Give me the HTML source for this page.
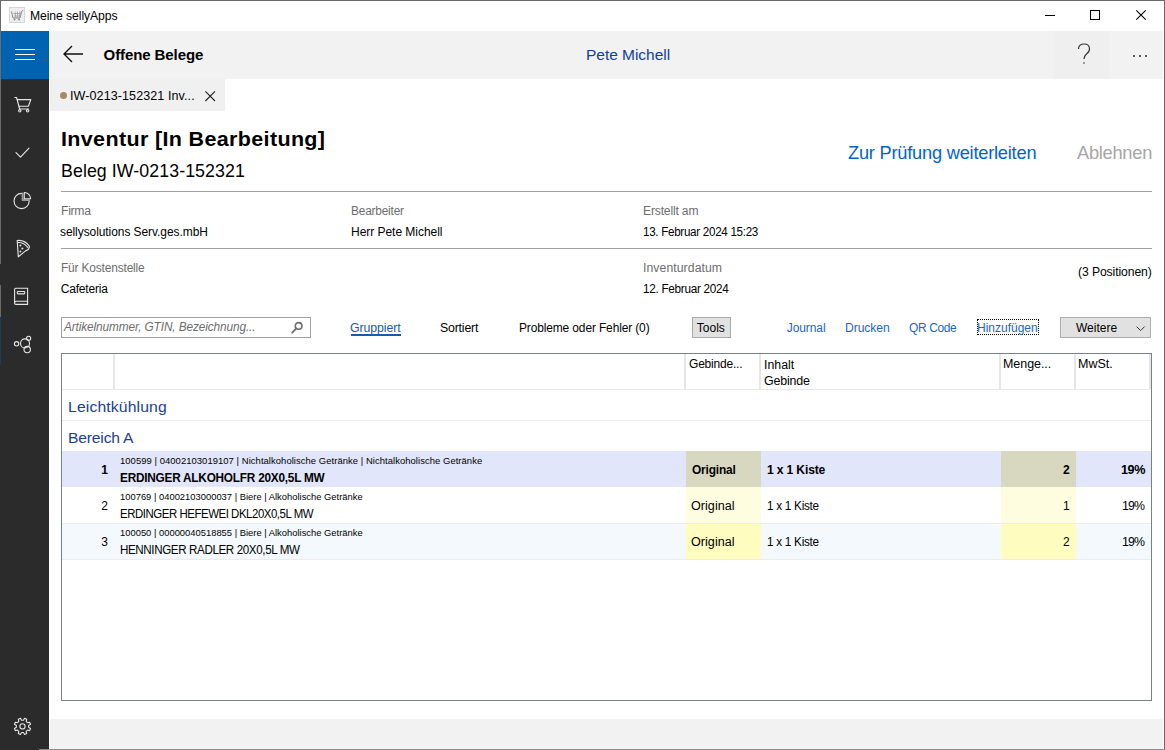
<!DOCTYPE html>
<html><head><meta charset="utf-8"><title>Meine sellyApps</title>
<style>
html,body{margin:0;padding:0;}
body{width:1165px;height:750px;overflow:hidden;position:relative;background:#fff;font-family:"Liberation Sans",sans-serif;}
.a{position:absolute;}
.t{position:absolute;white-space:nowrap;line-height:1;font-family:"Liberation Sans",sans-serif;}
svg{position:absolute;overflow:visible;}
</style></head><body>
<!-- window borders -->
<div class="a" style="left:0;top:0;width:1165px;height:1px;background:#6b6b6b"></div>

<div class="a" style="left:1164px;top:0;width:1px;height:750px;background:#666"></div>
<!-- app icon -->
<div class="a" style="left:9px;top:7px;width:16px;height:16px;background:#efefef;border:1px solid #d6d6d6;box-sizing:border-box"></div>
<svg style="left:9px;top:7px" width="16" height="16" viewBox="0 0 16 16"><path d="M2.5 4.5 L4 11 L11 11 L12.5 5 L14 3" fill="none" stroke="#8a8a8a" stroke-width="1"/><path d="M4.5 6.5 L12 6.5 M5 9 L11.5 9 M6 4.5 L6.8 11 M8.5 4.5 L8.5 11 M11 4.5 L10.2 11" stroke="#a0a0a0" stroke-width="0.8" fill="none"/><circle cx="5.5" cy="12.5" r="0.9" fill="#888"/><circle cx="10" cy="12.5" r="0.9" fill="#888"/></svg>
<!-- window controls -->
<div class="a" style="left:1045px;top:15px;width:10px;height:1px;background:#000"></div>
<div class="a" style="left:1090px;top:10px;width:10px;height:10px;border:1px solid #000;box-sizing:border-box"></div>
<svg style="left:1136px;top:10px" width="10" height="10" viewBox="0 0 10 10"><path d="M0.3 0.3 L9.7 9.7 M9.7 0.3 L0.3 9.7" stroke="#000" stroke-width="1.1"/></svg>

<!-- sidebar -->
<div class="a" style="left:0;top:31px;width:49px;height:719px;background:#2b2b2b"></div>
<div class="a" style="left:1px;top:31px;width:48px;height:48px;background:#0063b1"></div>
<div class="a" style="left:0;top:0;width:1px;height:264px;background:#6a6a6a"></div>
<div class="a" style="left:0;top:285px;width:1px;height:32px;background:#6a6a6a"></div>
<div class="a" style="left:0;top:317px;width:1px;height:48px;background:#1f3b5c"></div>
<div class="a" style="left:15px;top:49px;width:20px;height:1px;background:#fff"></div>
<div class="a" style="left:15px;top:54px;width:20px;height:1px;background:#fff"></div>
<div class="a" style="left:15px;top:59px;width:20px;height:1px;background:#fff"></div>
<!-- cart -->
<svg style="left:0;top:0" width="50" height="750">
 <g fill="none" stroke="#e6e6e6" stroke-width="1.1" stroke-linejoin="round" stroke-linecap="round">
  <path d="M14.8 97.5 L16.6 97.5 L19.6 109 L28.6 109"/>
  <path d="M17.2 99.6 L30.8 99.6 L28.4 106.2 L19 106.2"/>
  <circle cx="19.8" cy="110.8" r="1.2"/>
  <circle cx="27.6" cy="110.8" r="1.2"/>
  <!-- check -->
  <path d="M16 152.6 L20.5 157.2 L29 148.2"/>
  <!-- pie -->
  <path d="M21.6 193.4 A7.6 7.6 0 1 0 29.2 201"/>
  <path d="M24.3 192.5 A6.3 6.3 0 0 1 30.6 198.8 L24.3 198.8 Z"/>
  <path d="M22.6 193.6 L22.6 200 L29.2 200" stroke="#9c9c9c" stroke-width="2"/>
  <!-- pizza -->
  <path d="M17.2 240.5 Q24.8 239.6 29.4 246.2 Q29.6 249.6 25.9 250.6 L18.3 256.8 Z"/>
  <path d="M17.9 242.5 Q23.8 242.2 27.9 247.6"/>
  <!-- book -->
  <path d="M14.6 289.5 Q14.6 288.3 15.8 288.3 L27.6 288.3 L27.6 304.4 L15.8 304.4 Q14.6 304.4 14.6 303.2 Z"/>
  <path d="M14.6 302.6 Q14.6 301.2 16 301.2 L27.6 301.2"/>
  <rect x="17.3" y="291.5" width="7.4" height="2.4" rx="0.6"/>
  <!-- share -->
  <circle cx="16.6" cy="343.8" r="2.2"/>
  <circle cx="25" cy="343.4" r="4.5"/>
  <circle cx="28.6" cy="338.3" r="2.1"/>
  <circle cx="27.2" cy="349.6" r="3.2"/>
 </g>
 <g fill="#e6e6e6">
  <circle cx="20.4" cy="245.4" r="1"/><circle cx="22.4" cy="248.4" r="1"/><circle cx="20.4" cy="251.6" r="1"/>
 </g>
 <g fill="none" stroke="#e6e6e6" stroke-width="1.1" stroke-linejoin="round">
  <path d="M23.42 720.27 L24.58 718.36 L26.71 719.25 L26.19 721.42 L27.48 722.71 L29.65 722.19 L30.54 724.32 L28.63 725.48 L28.63 727.32 L30.54 728.48 L29.65 730.61 L27.48 730.09 L26.19 731.38 L26.71 733.55 L24.58 734.44 L23.42 732.53 L21.58 732.53 L20.42 734.44 L18.29 733.55 L18.81 731.38 L17.52 730.09 L15.35 730.61 L14.46 728.48 L16.37 727.32 L16.37 725.48 L14.46 724.32 L15.35 722.19 L17.52 722.71 L18.81 721.42 L18.29 719.25 L20.42 718.36 L21.58 720.27 Z"/>
  <circle cx="22.5" cy="726.4" r="2.6"/>
 </g>
</svg>

<!-- header -->
<div class="a" style="left:50px;top:31px;width:1113px;height:48px;background:#f2f2f2"></div>
<div class="a" style="left:1054px;top:31px;width:55px;height:48px;background:#efefef"></div>
<svg style="left:63px;top:45px" width="21" height="18" viewBox="0 0 21 18"><path d="M20 9 L1 9 M9 1 L1 9 L9 17" fill="none" stroke="#111" stroke-width="1.35"/></svg>
<!-- help ? and more -->
<svg style="left:1076px;top:43px" width="18" height="24"><path d="M2.5 6 Q2.5 1 8.2 1 Q13.5 1 13.5 6 Q13.5 9 10.5 11 Q8.5 12.5 8 16" fill="none" stroke="#333" stroke-width="1.2"/><circle cx="8" cy="20" r="0.8" fill="#333"/></svg>
<div class="a" style="left:1133px;top:55px;width:2.4px;height:2.4px;border-radius:2px;background:#222"></div>
<div class="a" style="left:1139px;top:55px;width:2.4px;height:2.4px;border-radius:2px;background:#222"></div>
<div class="a" style="left:1145px;top:55px;width:2.4px;height:2.4px;border-radius:2px;background:#222"></div>

<!-- tab -->
<div class="a" style="left:50px;top:79px;width:175px;height:32px;background:#f0f0f0"></div>
<div class="a" style="left:60px;top:92px;width:7px;height:7px;border-radius:50%;background:#a68a64"></div>
<svg style="left:205px;top:91px" width="11" height="11" viewBox="0 0 11 11"><path d="M0.4 0.4 L10 10 M10 0.4 L0.4 10" stroke="#222" stroke-width="1.1"/></svg>

<!-- separators -->
<div class="a" style="left:61px;top:191px;width:1091px;height:1px;background:#a0a0a0"></div>
<div class="a" style="left:61px;top:248px;width:1091px;height:1px;background:#a0a0a0"></div>

<!-- search box -->
<div class="a" style="left:61px;top:317px;width:250px;height:21px;border:1px solid #a0a0a0;box-sizing:border-box;background:#fff"></div>
<svg style="left:290px;top:321px" width="16" height="14" viewBox="0 0 16 14"><circle cx="8.6" cy="4.9" r="3.3" fill="none" stroke="#6b6b6b" stroke-width="1.6"/><path d="M6.3 7.3 L2.2 11.6" stroke="#6b6b6b" stroke-width="1.7" stroke-linecap="round"/></svg>
<!-- Gruppiert underline -->
<div class="a" style="left:351px;top:334px;width:50px;height:2px;background:#1a5aa8"></div>
<!-- Tools button -->
<div class="a" style="left:692px;top:317px;width:39px;height:21px;border:1px solid #a9a9a9;box-sizing:border-box;background:#e1e1e1"></div>
<!-- Hinzufuegen focus rect -->
<div class="a" style="left:977px;top:319px;width:62px;height:16px;border:1px dotted #000;box-sizing:border-box"></div>
<!-- Weitere button -->
<div class="a" style="left:1060px;top:317px;width:91px;height:21px;border:1px solid #adadad;box-sizing:border-box;background:#e1e1e1"></div>
<svg style="left:1136px;top:326px" width="10" height="6" viewBox="0 0 10 6"><path d="M0.6 0.6 L4.6 4.6 L8.6 0.6" fill="none" stroke="#333" stroke-width="1"/></svg>

<!-- grid -->
<div class="a" style="left:61px;top:353px;width:1091px;height:348px;border:1px solid #7a7f88;box-sizing:border-box;background:#fff"></div>
<div class="a" style="left:62px;top:389px;width:1088px;height:1px;background:#e8e8e8"></div>
<div class="a" style="left:113px;top:354px;width:2px;height:35px;background:#e6e6e6"></div>
<div class="a" style="left:684px;top:354px;width:2px;height:35px;background:#e6e6e6"></div>
<div class="a" style="left:759px;top:354px;width:2px;height:35px;background:#e6e6e6"></div>
<div class="a" style="left:999px;top:354px;width:2px;height:35px;background:#e6e6e6"></div>
<div class="a" style="left:1074px;top:354px;width:2px;height:35px;background:#e6e6e6"></div>
<div class="a" style="left:1149px;top:354px;width:2px;height:35px;background:#e6e6e6"></div>
<div class="a" style="left:62px;top:420px;width:1089px;height:1px;background:#ececec"></div>
<!-- rows -->
<div class="a" style="left:62px;top:451px;width:1089px;height:36px;background:#e1e6fa"></div>
<div class="a" style="left:686px;top:451px;width:75px;height:36px;background:#d8d8c0"></div>
<div class="a" style="left:1001px;top:451px;width:75px;height:36px;background:#d8d8c0"></div>
<div class="a" style="left:686px;top:487px;width:75px;height:36px;background:#fefde0"></div>
<div class="a" style="left:1001px;top:487px;width:75px;height:36px;background:#fefde0"></div>
<div class="a" style="left:62px;top:523px;width:1089px;height:36px;background:#f3f9fc"></div>
<div class="a" style="left:686px;top:523px;width:75px;height:36px;background:#fffcc0"></div>
<div class="a" style="left:1001px;top:523px;width:75px;height:36px;background:#fffcc0"></div>
<div class="a" style="left:62px;top:523px;width:1089px;height:1px;background:#ececec"></div>
<div class="a" style="left:62px;top:559px;width:1089px;height:1px;background:#ececec"></div>

<!-- bottom strip -->
<div class="a" style="left:50px;top:719px;width:1113px;height:30px;background:#f2f2f2"></div>
<div class="a" style="left:39px;top:749px;width:1126px;height:1px;background:#8c8c8c"></div>

<div class="t" style="left:29.61px;top:9.90px;font-size:12.2px;color:#000;letter-spacing:-0.074px;transform:scaleX(0.9977);transform-origin:0 0">Meine sellyApps</div>
<div class="t" style="left:103.60px;top:47.10px;font-size:15px;color:#000;font-weight:bold;letter-spacing:-0.094px">Offene Belege</div>
<div class="t" style="left:586.00px;top:46.70px;font-size:15.5px;color:#10409a;letter-spacing:-0.027px">Pete Michell</div>
<div class="t" style="left:69.78px;top:89.60px;font-size:12.3px;color:#000;letter-spacing:0.091px;transform:scaleX(1.0188);transform-origin:0 0">IW-0213-152321 Inv...</div>
<div class="t" style="left:60.77px;top:128.80px;font-size:20.8px;color:#000;font-weight:bold;letter-spacing:0.336px;transform:scaleX(1.0340);transform-origin:0 0">Inventur [In Bearbeitung]</div>
<div class="t" style="left:60.79px;top:162.70px;font-size:17.7px;color:#000;letter-spacing:0.059px;transform:scaleX(1.0062);transform-origin:0 0">Beleg IW-0213-152321</div>
<div class="t" style="left:848.40px;top:143.90px;font-size:18.5px;color:#0063cf;letter-spacing:-0.207px;transform:scaleX(0.9837);transform-origin:0 0">Zur Prüfung weiterleiten</div>
<div class="t" style="left:1077.00px;top:143.90px;font-size:18.5px;color:#a6a6a6;letter-spacing:-0.285px;transform:scaleX(0.9884);transform-origin:0 0">Ablehnen</div>
<div class="t" style="left:60.80px;top:204.60px;font-size:12px;color:#6d6d6d;letter-spacing:-0.284px;transform:scaleX(1.0149);transform-origin:0 0">Firma</div>
<div class="t" style="left:59.80px;top:226.20px;font-size:12px;color:#000;letter-spacing:-0.056px;transform:scaleX(0.9965);transform-origin:0 0">sellysolutions Serv.ges.mbH</div>
<div class="t" style="left:351.40px;top:204.60px;font-size:12px;color:#6d6d6d;letter-spacing:-0.193px;transform:scaleX(0.9886);transform-origin:0 0">Bearbeiter</div>
<div class="t" style="left:351.40px;top:226.20px;font-size:12px;color:#000;letter-spacing:-0.052px;transform:scaleX(1.0032);transform-origin:0 0">Herr Pete Michell</div>
<div class="t" style="left:642.60px;top:204.60px;font-size:12px;color:#6d6d6d;letter-spacing:-0.158px;transform:scaleX(1.0066);transform-origin:0 0">Erstellt am</div>
<div class="t" style="left:642.60px;top:226.20px;font-size:12px;color:#000;letter-spacing:-0.309px;transform:scaleX(0.9696);transform-origin:0 0">13. Februar 2024 15:23</div>
<div class="t" style="left:60.80px;top:261.60px;font-size:12px;color:#6d6d6d;letter-spacing:-0.173px;transform:scaleX(0.9954);transform-origin:0 0">Für Kostenstelle</div>
<div class="t" style="left:60.80px;top:283.10px;font-size:12px;color:#000;letter-spacing:-0.208px">Cafeteria</div>
<div class="t" style="left:642.99px;top:261.60px;font-size:12px;color:#6d6d6d;letter-spacing:0.074px;transform:scaleX(1.0184);transform-origin:0 0">Inventurdatum</div>
<div class="t" style="left:643.00px;top:283.10px;font-size:12px;color:#000;letter-spacing:-0.293px;transform:scaleX(0.9779);transform-origin:0 0">12. Februar 2024</div>
<div class="t" style="left:1078.40px;top:266.30px;font-size:12px;color:#000;letter-spacing:-0.092px;transform:scaleX(1.0138);transform-origin:0 0">(3 Positionen)</div>
<div class="t" style="left:64.18px;top:321.40px;font-size:12px;color:#6d6d6d;font-style:italic;letter-spacing:-0.112px;transform:scaleX(0.9859);transform-origin:0 0">Artikelnummer, GTIN, Bezeichnung...</div>
<div class="t" style="left:350.00px;top:321.80px;font-size:12px;color:#1a5aa8;letter-spacing:-0.088px;transform:scaleX(1.0263);transform-origin:0 0">Gruppiert</div>
<div class="t" style="left:440.00px;top:322.00px;font-size:12px;color:#000;letter-spacing:-0.173px;transform:scaleX(1.0257);transform-origin:0 0">Sortiert</div>
<div class="t" style="left:519.20px;top:322.00px;font-size:12px;color:#000;letter-spacing:-0.126px;transform:scaleX(0.9959);transform-origin:0 0">Probleme oder Fehler (0)</div>
<div class="t" style="left:696.80px;top:322.00px;font-size:12px;color:#000">Tools</div>
<div class="t" style="left:786.80px;top:321.80px;font-size:12px;color:#1e64c8;letter-spacing:-0.101px">Journal</div>
<div class="t" style="left:845.40px;top:321.80px;font-size:12px;color:#1e64c8;letter-spacing:-0.085px;transform:scaleX(1.0121);transform-origin:0 0">Drucken</div>
<div class="t" style="left:909.00px;top:321.80px;font-size:12px;color:#1e64c8;letter-spacing:-0.333px;transform:scaleX(0.9940);transform-origin:0 0">QR Code</div>
<div class="t" style="left:977.00px;top:321.80px;font-size:12px;color:#1e64c8">Hinzufügen</div>
<div class="t" style="left:1076.00px;top:322.00px;font-size:12px;color:#000">Weitere</div>
<div class="t" style="left:688.60px;top:357.70px;font-size:12px;color:#000;letter-spacing:-0.185px;transform:scaleX(0.9978);transform-origin:0 0">Gebinde...</div>
<div class="t" style="left:763.60px;top:358.50px;font-size:12px;color:#000;letter-spacing:0.018px;transform:scaleX(1.0252);transform-origin:0 0">Inhalt</div>
<div class="t" style="left:763.60px;top:374.60px;font-size:12px;color:#000;letter-spacing:-0.161px;transform:scaleX(1.0355);transform-origin:0 0">Gebinde</div>
<div class="t" style="left:1003.20px;top:357.70px;font-size:12px;color:#000;letter-spacing:-0.047px;transform:scaleX(1.0405);transform-origin:0 0">Menge...</div>
<div class="t" style="left:1078.40px;top:357.70px;font-size:12px;color:#000;letter-spacing:-0.025px;transform:scaleX(1.0421);transform-origin:0 0">MwSt.</div>
<div class="t" style="left:67.78px;top:398.60px;font-size:15.5px;color:#1b3f91;letter-spacing:0.122px;transform:scaleX(1.0158);transform-origin:0 0">Leichtkühlung</div>
<div class="t" style="left:67.82px;top:429.50px;font-size:15.5px;color:#1b3f91;letter-spacing:-0.183px;transform:scaleX(1.0102);transform-origin:0 0">Bereich A</div>
<div class="t" style="left:101.20px;top:464.00px;font-size:12px;color:#000;font-weight:bold">1</div>
<div class="t" style="left:120.20px;top:457.00px;font-size:9.3px;color:#000;letter-spacing:0.054px;transform:scaleX(1.0151);transform-origin:0 0">100599 | 04002103019107 | Nichtalkoholische Getränke | Nichtalkoholische Getränke</div>
<div class="t" style="left:120.20px;top:471.70px;font-size:12px;color:#000;font-weight:bold;letter-spacing:-0.221px;transform:scaleX(0.9818);transform-origin:0 0">ERDINGER ALKOHOLFR 20X0,5L MW</div>
<div class="t" style="left:692.20px;top:463.80px;font-size:12px;color:#000;font-weight:bold;letter-spacing:-0.177px;transform:scaleX(0.9920);transform-origin:0 0">Original</div>
<div class="t" style="left:766.60px;top:463.80px;font-size:12px;color:#000;font-weight:bold;letter-spacing:-0.143px;transform:scaleX(1.0068);transform-origin:0 0">1 x 1 Kiste</div>
<div class="t" style="left:1063.00px;top:463.80px;font-size:12px;color:#000;font-weight:bold">2</div>
<div class="t" style="left:1121.00px;top:463.80px;font-size:12px;color:#000;font-weight:bold;letter-spacing:-0.373px;transform:scaleX(1.0489);transform-origin:0 0">19%</div>
<div class="t" style="left:101.20px;top:500.00px;font-size:12px;color:#000">2</div>
<div class="t" style="left:120.20px;top:493.00px;font-size:9.3px;color:#000;letter-spacing:0.007px;transform:scaleX(1.0080);transform-origin:0 0">100769 | 04002103000037 | Biere | Alkoholische Getränke</div>
<div class="t" style="left:120.20px;top:507.70px;font-size:12px;color:#000;letter-spacing:-0.470px;transform:scaleX(0.9521);transform-origin:0 0">ERDINGER HEFEWEI DKL20X0,5L MW</div>
<div class="t" style="left:691.20px;top:499.80px;font-size:12px;color:#000;letter-spacing:0.037px;transform:scaleX(1.0467);transform-origin:0 0">Original</div>
<div class="t" style="left:766.60px;top:499.80px;font-size:12px;color:#000;letter-spacing:-0.276px;transform:scaleX(0.9790);transform-origin:0 0">1 x 1 Kiste</div>
<div class="t" style="left:1063.00px;top:499.80px;font-size:12px;color:#000">1</div>
<div class="t" style="left:1122.40px;top:499.80px;font-size:12px;color:#000;letter-spacing:-0.813px;transform:scaleX(1.0271);transform-origin:0 0">19%</div>
<div class="t" style="left:101.20px;top:536.00px;font-size:12px;color:#000">3</div>
<div class="t" style="left:120.20px;top:529.00px;font-size:9.3px;color:#000;letter-spacing:0.007px;transform:scaleX(1.0080);transform-origin:0 0">100050 | 00000040518855 | Biere | Alkoholische Getränke</div>
<div class="t" style="left:120.20px;top:543.70px;font-size:12px;color:#000;letter-spacing:-0.382px;transform:scaleX(0.9657);transform-origin:0 0">HENNINGER RADLER 20X0,5L MW</div>
<div class="t" style="left:691.20px;top:535.80px;font-size:12px;color:#000;letter-spacing:0.037px;transform:scaleX(1.0467);transform-origin:0 0">Original</div>
<div class="t" style="left:766.60px;top:535.80px;font-size:12px;color:#000;letter-spacing:-0.276px;transform:scaleX(0.9790);transform-origin:0 0">1 x 1 Kiste</div>
<div class="t" style="left:1063.00px;top:535.80px;font-size:12px;color:#000">2</div>
<div class="t" style="left:1122.40px;top:535.80px;font-size:12px;color:#000;letter-spacing:-0.813px;transform:scaleX(1.0271);transform-origin:0 0">19%</div>
</body></html>
